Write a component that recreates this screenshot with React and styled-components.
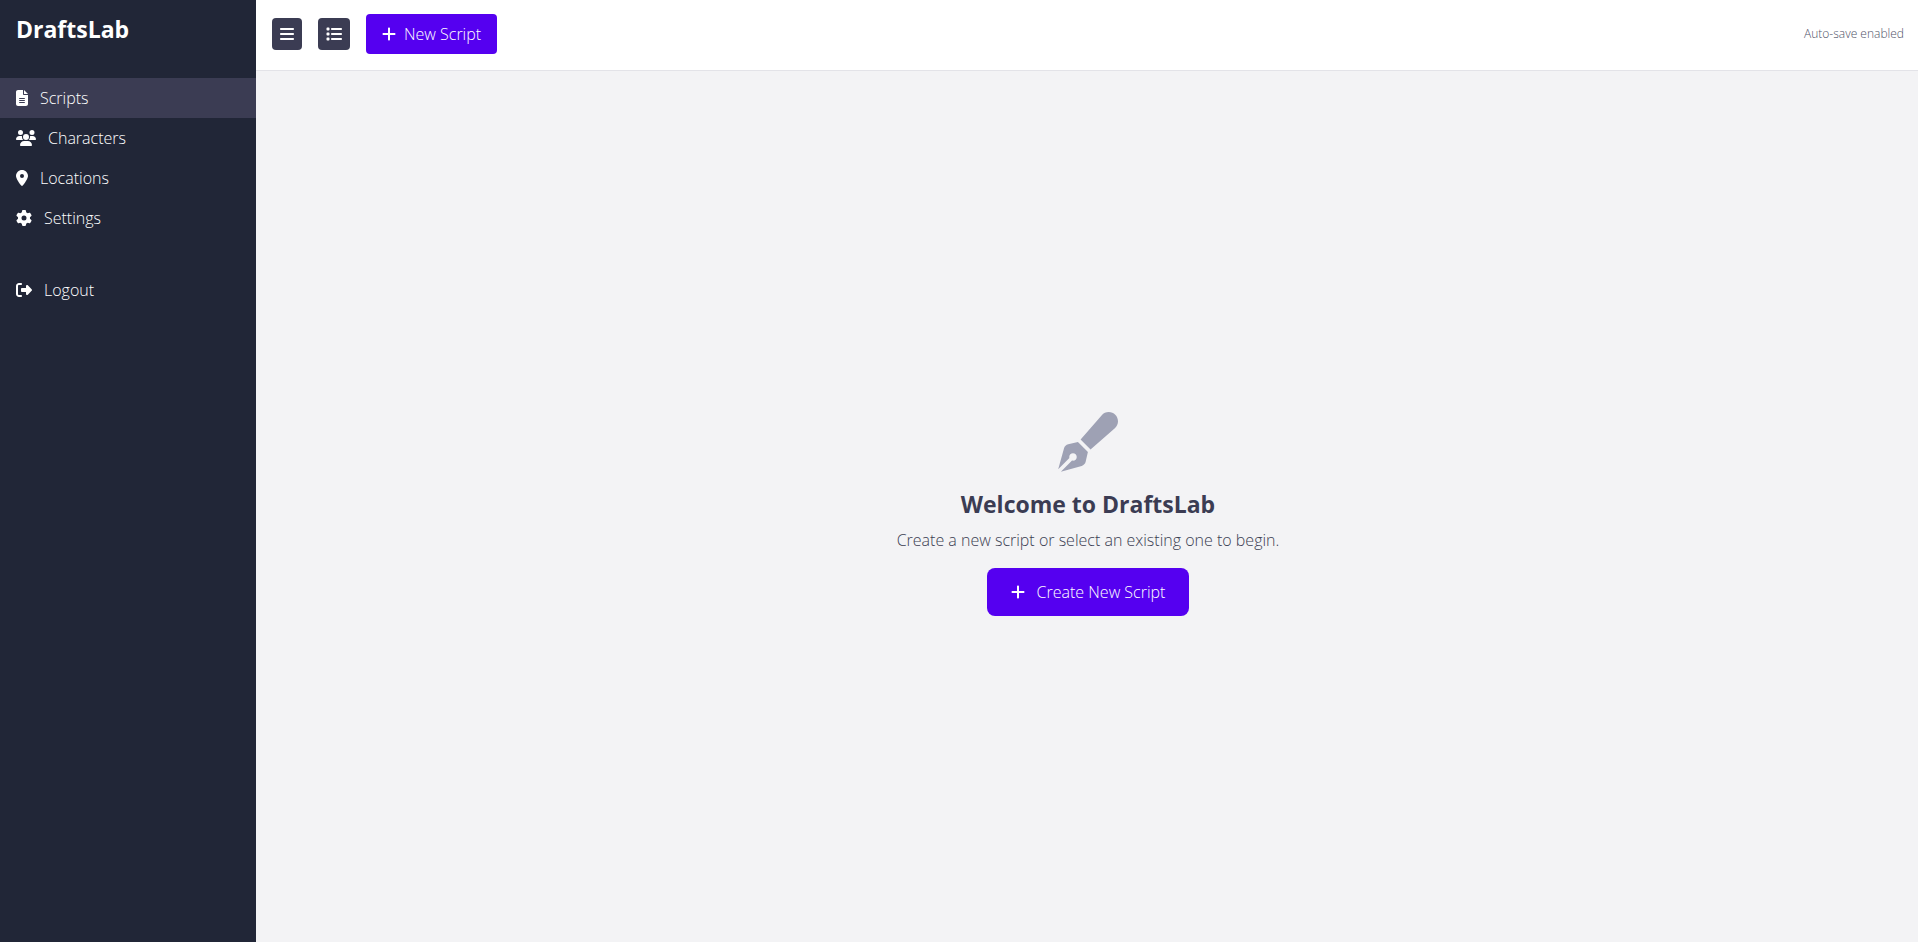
import React, { useState } from "react"
import styled, { createGlobalStyle } from "styled-components"
import {
  FaBars,
  FaFileLines,
  FaGear,
  FaList,
  FaLocationDot,
  FaPenFancy,
  FaPlus,
  FaRightFromBracket,
  FaUsers,
} from "react-icons/fa6"

const GlobalStyle = createGlobalStyle`
  * {
    box-sizing: border-box;
  }
  body {
    margin: 0;
    background-color: #f3f3f5;
    font-family: "Open Sans", "Noto Sans", sans-serif;
    font-size: 16px;
    font-weight: 300;
    line-height: 24px;
  }
  button {
    font: inherit;
    cursor: pointer;
  }
`
const Layout = styled.div`
  display: flex;
  min-height: 100vh;
`
const SideBar = styled.aside`
  flex: 0 0 256px;
  padding-top: 13px;
  background-color: #212637;
  color: #ffffff;
`
const Brand = styled.h1`
  margin: 0 0 33px;
  padding: 0 16px;
  font-size: 23px;
  font-weight: 700;
  line-height: 32px;
`
const NavList = styled.nav`
  display: flex;
  flex-direction: column;
  margin-bottom: 32px;
`
const NavItem = styled.a`
  display: flex;
  align-items: center;
  gap: 12px;
  height: 40px;
  padding: 0 16px;
  color: #ffffff;
  text-decoration: none;
  background-color: ${props => props.$active ? '#3b3c53' : 'transparent'};
  svg {
    height: 16px;
    width: ${props => props.$iconWidth || '16px'};
  }
`
const Main = styled.main`
  flex: 1;
  display: flex;
  flex-direction: column;
`
const TopBar = styled.header`
  display: flex;
  align-items: center;
  gap: 16px;
  padding: 14px 14px 16px 16px;
  background-color: #ffffff;
  border-bottom: 1px solid #e3e3e8;
`
const IconButton = styled.button`
  display: flex;
  align-items: center;
  height: 32px;
  padding: 0 8px;
  border: none;
  border-radius: 4px;
  background-color: #3b3c53;
  color: #ffffff;
  svg {
    height: 16px;
    width: ${props => props.$iconWidth || '16px'};
  }
`
const PrimaryButton = styled.button`
  display: flex;
  align-items: center;
  gap: ${props => props.$large ? '12px' : '8px'};
  height: ${props => props.$large ? '48px' : '40px'};
  padding: ${props => props.$large ? '0 24px' : '0 16px'};
  border: none;
  border-radius: ${props => props.$large ? '8px' : '4px'};
  background-color: #5500f0;
  color: #ffffff;
  svg {
    height: 16px;
    width: 14px;
  }
`
const SaveStatus = styled.span`
  margin-left: auto;
  color: #4f5268;
  font-size: 12px;
  line-height: 16px;
`
const Welcome = styled.section`
  flex: 1;
  display: flex;
  flex-direction: column;
  align-items: center;
  justify-content: center;
  padding: 14px 0 0 2px;
`
const WelcomeIcon = styled(FaPenFancy)`
  width: 60px;
  height: 60px;
  margin-bottom: 16px;
  color: #9ea1b4;
`
const WelcomeTitle = styled.h2`
  margin: 0 0 8px;
  color: #3b3c53;
  font-size: 23px;
  font-weight: 700;
  line-height: 32px;
`
const WelcomeText = styled.p`
  margin: 0 0 16px;
  color: #3b3e52;
`

const links = [
  { name: "Scripts", icon: FaFileLines, iconWidth: "12px" },
  { name: "Characters", icon: FaUsers, iconWidth: "20px" },
  { name: "Locations", icon: FaLocationDot, iconWidth: "12px" },
  { name: "Settings", icon: FaGear, iconWidth: "16px" },
]

export default function App() {
  const [page, setPage] = useState("Scripts")

  return (
    <>
      <GlobalStyle />
      <Layout>
        <SideBar>
          <Brand>DraftsLab</Brand>
          <NavList>
            {links.map(({ name, icon: Icon, iconWidth }) => (
              <NavItem
                key={name}
                href={`#${name.toLowerCase()}`}
                $active={page === name}
                $iconWidth={iconWidth}
                onClick={() => setPage(name)}
              >
                <Icon />
                {name}
              </NavItem>
            ))}
          </NavList>
          <NavItem href="#logout">
            <FaRightFromBracket />
            Logout
          </NavItem>
        </SideBar>
        <Main>
          <TopBar>
            <IconButton aria-label="Toggle sidebar" $iconWidth="14px"><FaBars /></IconButton>
            <IconButton aria-label="Toggle outline"><FaList /></IconButton>
            <PrimaryButton>
              <FaPlus />
              New Script
            </PrimaryButton>
            <SaveStatus>Auto-save enabled</SaveStatus>
          </TopBar>
          <Welcome>
            <WelcomeIcon />
            <WelcomeTitle>Welcome to DraftsLab</WelcomeTitle>
            <WelcomeText>Create a new script or select an existing one to begin.</WelcomeText>
            <PrimaryButton $large>
              <FaPlus />
              Create New Script
            </PrimaryButton>
          </Welcome>
        </Main>
      </Layout>
    </>
  )
}
